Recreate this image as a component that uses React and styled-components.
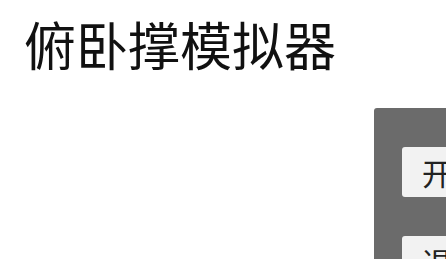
import React from 'react';
import styled, { createGlobalStyle } from 'styled-components';

const GlobalStyle = createGlobalStyle`
  html, body {
    margin: 0;
    padding: 0;
    background: #ffffff;
    overflow: hidden;
  }
  body {
    font-family: "Noto Sans CJK SC", "Noto Sans", sans-serif;
    color: #111;
  }
`;

const Page = styled.div`
  width: 100%;
  min-height: 100vh;
  padding: 0 0 0 24px;
  box-sizing: border-box;
`;

const Title = styled.h1`
  margin: 0;
  padding-top: 8px;
  font-size: 52px;
  font-weight: 400;
  line-height: 72px;
  letter-spacing: 0;
  white-space: nowrap;
`;

const Main = styled.div`
  display: flex;
  margin-top: 28px;
`;

const Stage = styled.div`
  width: 350px;
  flex-shrink: 0;
`;

const Panel = styled.div`
  width: 220px;
  flex-shrink: 0;
  background: #6b6b6b;
  border-radius: 3px;
  padding: 39px 28px;
  box-sizing: border-box;
  display: flex;
  flex-direction: column;
  gap: 39px;
  min-height: 240px;
`;

const Button = styled.button`
  height: 50px;
  width: 164px;
  border: none;
  border-radius: 3px;
  background: #f2f2f2;
  color: #222;
  font-family: "Noto Sans CJK SC", "Noto Sans", sans-serif;
  font-size: 30px;
  text-align: left;
  padding: 0 20px;
  white-space: nowrap;
`;

export default function App() {
  return (
    <>
      <GlobalStyle />
      <Page>
        <Title>俯卧撑模拟器</Title>
        <Main>
          <Stage />
          <Panel>
            <Button>开始</Button>
            <Button>退出</Button>
          </Panel>
        </Main>
      </Page>
    </>
  );
}
